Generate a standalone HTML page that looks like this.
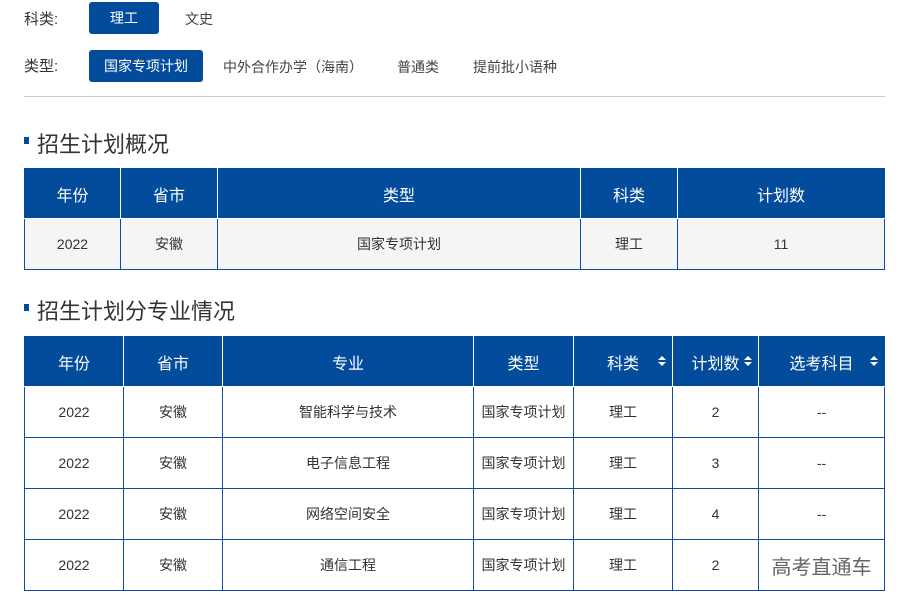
<!DOCTYPE html>
<html><head><meta charset="utf-8"><style>
body{margin:0;width:901px;height:601px;background:#fff;font-family:"Liberation Sans","Noto Sans CJK SC",sans-serif;color:#333;position:relative;overflow:hidden}
.a{position:absolute}
.lbl{font-size:15px;color:#333}
.btn{position:absolute;background:#034c9b;color:#fff;font-size:14px;border-radius:3px;text-align:center}
.opt{position:absolute;font-size:14px;color:#444}
.h{position:absolute;font-size:22px;color:#333}
.h:before{content:"";position:absolute;left:-13px;top:10px;width:5px;height:7px;background:#034c9b}
table{position:absolute;border-collapse:collapse;table-layout:fixed;left:24px;width:861px}
td,th{border:1px solid #0e4c9c;text-align:center;font-size:14px;color:#333;padding:0;position:relative}
th{background:#034c9b;color:#fff;font-weight:normal;font-size:16px;height:49px;border-color:#fff;border-top-color:#034c9b}
th:first-child{border-left-color:#034c9b}th:last-child{border-right-color:#034c9b}
td{height:50px}
.s:after{content:"";position:absolute;right:6px;top:19px;border:4px solid transparent;border-bottom:4px solid #fff;border-top:0}
.s:before{content:"";position:absolute;right:6px;top:25px;border:4px solid transparent;border-top:4px solid #fff;border-bottom:0}
</style></head><body>
<div class="a lbl" style="left:24px;top:8px">科类:</div>
<div class="btn" style="left:89px;top:2px;width:70px;height:32px;line-height:32px">理工</div>
<div class="opt" style="left:185px;top:9px">文史</div>
<div class="a lbl" style="left:24px;top:55px">类型:</div>
<div class="btn" style="left:89px;top:50px;width:114px;height:32px;line-height:32px">国家专项计划</div>
<div class="opt" style="left:223px;top:57px">中外合作办学（海南）</div>
<div class="opt" style="left:397px;top:57px">普通类</div>
<div class="opt" style="left:473px;top:57px">提前批小语种</div>
<div class="a" style="left:24px;top:96px;width:861px;height:1px;background:#ccc"></div>
<div class="h" style="left:37px;top:127px">招生计划概况</div>
<table style="top:168px">
<colgroup><col style="width:96px"><col style="width:97px"><col style="width:363px"><col style="width:97px"><col></colgroup>
<tr><th>年份</th><th>省市</th><th>类型</th><th>科类</th><th>计划数</th></tr>
<tr style="background:#f5f5f5"><td>2022</td><td>安徽</td><td>国家专项计划</td><td>理工</td><td>11</td></tr>
</table>
<div class="h" style="left:37px;top:294px">招生计划分专业情况</div>
<table style="top:336px">
<colgroup><col style="width:99px"><col style="width:99px"><col style="width:251px"><col style="width:100px"><col style="width:99px"><col style="width:86px"><col></colgroup>
<tr><th>年份</th><th>省市</th><th>专业</th><th>类型</th><th class="s">科类</th><th class="s">计划数</th><th class="s">选考科目</th></tr>
<tr><td>2022</td><td>安徽</td><td>智能科学与技术</td><td>国家专项计划</td><td>理工</td><td>2</td><td>--</td></tr>
<tr><td>2022</td><td>安徽</td><td>电子信息工程</td><td>国家专项计划</td><td>理工</td><td>3</td><td>--</td></tr>
<tr><td>2022</td><td>安徽</td><td>网络空间安全</td><td>国家专项计划</td><td>理工</td><td>4</td><td>--</td></tr>
<tr><td>2022</td><td>安徽</td><td>通信工程</td><td>国家专项计划</td><td>理工</td><td>2</td><td><span style="font-size:20px;color:#666">高考直通车</span></td></tr>
</table>
</body></html>
